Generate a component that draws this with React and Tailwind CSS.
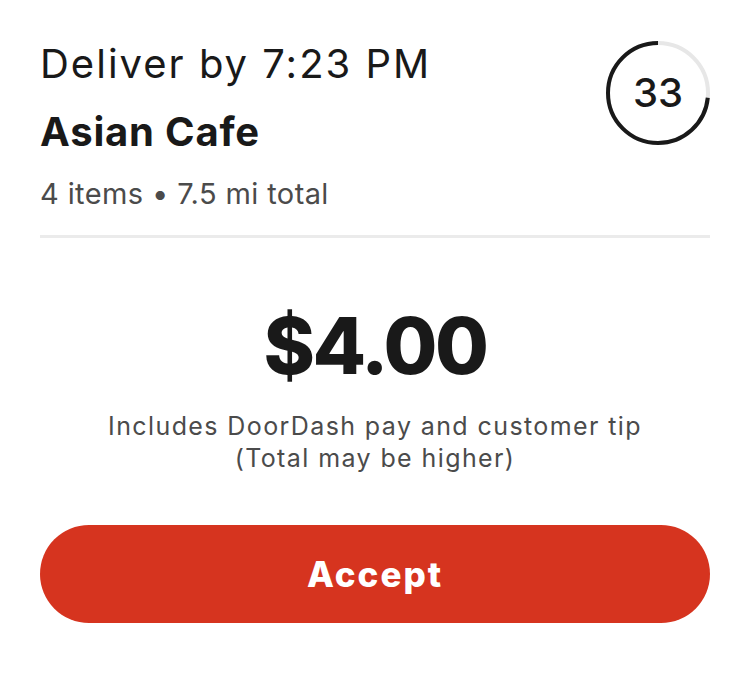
export default function App() {
  const r = 50;
  const c = 2 * Math.PI * r;
  const frac = 33 / 45;
  return (
    <div className="w-[750px] h-[683px] bg-white px-[40px] pt-[40px] font-['Inter',sans-serif] text-[#191919]">
      <div className="flex items-start justify-between">
        <div className="flex flex-col">
          <div className="text-[40px] leading-[48px] font-normal tracking-[2px]">Deliver by 7:23 PM</div>
          <div className="mt-[22px] text-[40px] leading-[44px] font-bold tracking-[0.8px]">Asian Cafe</div>
          <div className="mt-[22px] text-[29px] leading-[36px] text-[#4b4b4b] tracking-[0.4px]">4 items • 7.5 mi total</div>
        </div>
        <div className="relative w-[106px] h-[106px] -mr-[1px]">
          <svg width="106" height="106" viewBox="0 0 106 106">
            <circle cx="53" cy="53" r={r} fill="none" stroke="#e7e7e7" strokeWidth="4" />
            <circle
              cx="53"
              cy="53"
              r={r}
              fill="none"
              stroke="#191919"
              strokeWidth="4"
              strokeDasharray={`${c * frac} ${c}`}
              transform="rotate(-90 53 53) scale(1 -1) translate(0 -106)"
            />
          </svg>
          <div className="absolute inset-0 flex items-center justify-center text-[40px] font-medium">33</div>
        </div>
      </div>
      <div className="mt-[23px] h-[3px] bg-[#ebebeb]" />
      <div className="mt-[66px] flex flex-col items-center">
        <div className="text-[78px] leading-[84px] font-extrabold tracking-[-2.5px]">$4.00</div>
        <div className="mt-[22px] text-[25px] leading-[32px] text-[#4b4b4b] text-center tracking-[1.4px]">
          Includes DoorDash pay and customer tip
          <br />
          (Total may be higher)
        </div>
      </div>
      <div className="mt-[51px] h-[98px] rounded-full bg-[#d6341f] flex items-center justify-center">
        <span className="text-white text-[35px] font-extrabold tracking-[2px]">Accept</span>
      </div>
    </div>
  );
}
